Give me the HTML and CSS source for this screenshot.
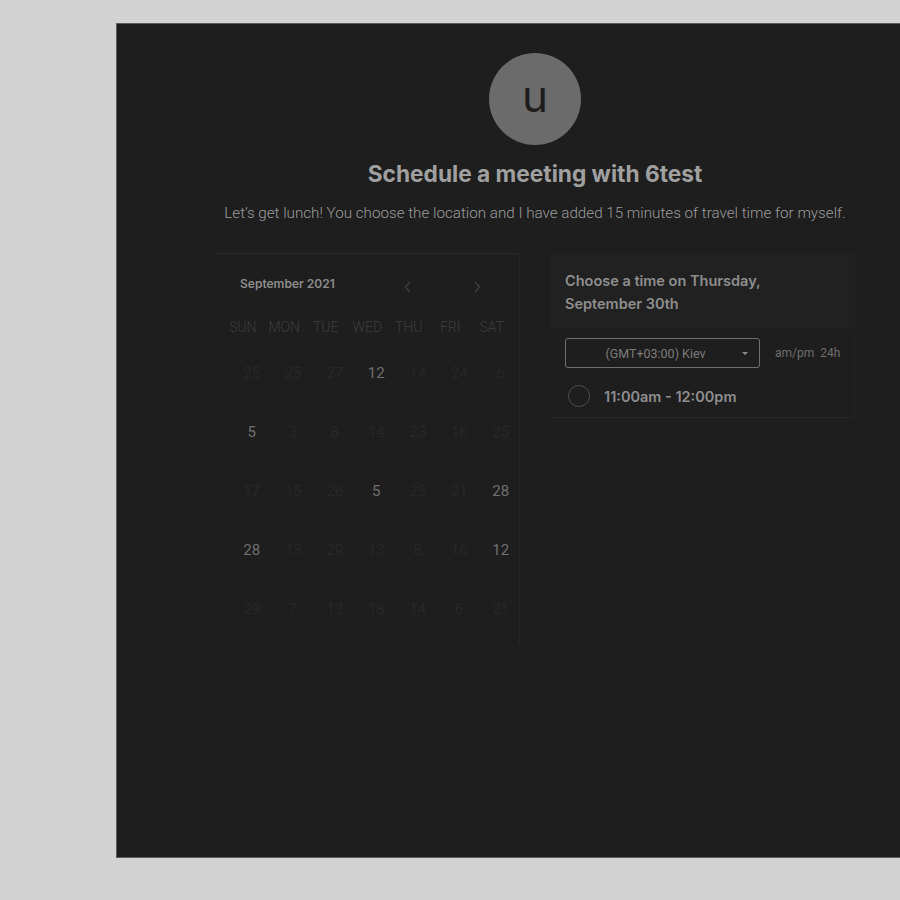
FILE: index.html
```html
<!DOCTYPE html>
<html>
<head>
<meta charset="utf-8">
<link rel="stylesheet" href="styles.css">
</head>
<body>
<div class="panel">
  <div class="inner">
    <div class="avatar">u</div>
    <h1 class="title">Schedule a meeting with 6test</h1>
    <p class="subtitle">Let’s get lunch! You choose the location and I have added 15 minutes of travel time for myself.</p>
    <div class="cards">
      <div class="calendar">
        <div class="cal-head">
          <span class="month">September 2021</span>
          <span class="arrow prev"><svg width="10" height="14" viewBox="0 0 10 14"><path d="M7 2 L2.5 7 L7 12" fill="none" stroke="#3e3e3e" stroke-width="1.5"/></svg></span>
          <span class="arrow next"><svg width="10" height="14" viewBox="0 0 10 14"><path d="M3 2 L7.5 7 L3 12" fill="none" stroke="#3e3e3e" stroke-width="1.5"/></svg></span>
        </div>
        <div class="grid">
          <span class="wd">SUN</span><span class="wd">MON</span><span class="wd">TUE</span><span class="wd">WED</span><span class="wd">THU</span><span class="wd">FRI</span><span class="wd">SAT</span>
          <span class="d">25</span><span class="d">25</span><span class="d">27</span><span class="d on">12</span><span class="d">14</span><span class="d">24</span><span class="d">6</span>
          <span class="d on">5</span><span class="d">3</span><span class="d">8</span><span class="d">14</span><span class="d">23</span><span class="d">16</span><span class="d">25</span>
          <span class="d">17</span><span class="d">15</span><span class="d">26</span><span class="d on">5</span><span class="d">25</span><span class="d">21</span><span class="d on">28</span>
          <span class="d on">28</span><span class="d">13</span><span class="d">29</span><span class="d">13</span><span class="d">8</span><span class="d">16</span><span class="d on">12</span>
          <span class="d">29</span><span class="d">7</span><span class="d">13</span><span class="d">18</span><span class="d">14</span><span class="d">6</span><span class="d">21</span>
        </div>
      </div>
      <div class="times">
        <div class="times-head">Choose a time on Thursday, September 30th</div>
        <div class="tz-row">
          <div class="select"><span>(GMT+03:00) Kiev</span><span class="caret"></span></div>
          <span class="fmt">am/pm&nbsp;&nbsp;24h</span>
        </div>
        <div class="slot">
          <span class="radio"></span>
          <span class="slot-text">11:00am - 12:00pm</span>
        </div>
      </div>
    </div>
  </div>
</div>
</body>
</html>
```

FILE: styles.css
```css
html, body {
  margin: 0;
  padding: 0;
  background: #d3d3d3;
  overflow: hidden;
}
body {
  padding: 23px 0 0 116px;
  height: 900px;
  box-sizing: border-box;
}
.panel {
  width: 784px;
  height: 835px;
  box-sizing: border-box;
  background: #1e1e1e;
  border: 1px solid #5c5c5c;
  border-right: none;
  padding: 29px 0 0 98px;
}
.inner {
  width: 640px;
  display: flex;
  flex-direction: column;
  align-items: center;
}
.avatar {
  width: 92px;
  height: 92px;
  border-radius: 50%;
  background: #6b6b6b;
  color: #1c1c1c;
  font-family: Inter, sans-serif;
  font-size: 44px;
  line-height: 86px;
  text-align: center;
}
.title {
  margin: 14px 0 0;
  font-family: Inter, sans-serif;
  font-weight: 700;
  font-size: 22.7px;
  line-height: 30px;
  color: #a0a0a0;
  white-space: nowrap;
}
.subtitle {
  margin: 13px 0 0;
  font-family: Roboto, sans-serif;
  font-weight: 300;
  font-size: 15.2px;
  line-height: 22px;
  color: #9c9c9c;
  white-space: nowrap;
}
.cards {
  margin-top: 29px;
  width: 640px;
  display: flex;
  gap: 30px;
  align-items: flex-start;
}
.calendar {
  width: 305px;
  box-sizing: border-box;
  border-top: 1px solid #292929;
  border-right: 1px solid #262626;
  padding: 0 6px 6px 7px;
}
.cal-head {
  height: 56px;
  display: flex;
  align-items: center;
  padding-left: 18px;
}
.month {
  font-family: Inter, sans-serif;
  font-weight: 600;
  font-size: 12px;
  color: #8c8c8c;
  width: 163px;
  margin-top: 2px;
}
.arrow {
  display: flex;
  margin-top: 10px;
}
.prev { margin-left: 0; }
.next { margin-left: 59px; }
.grid {
  display: grid;
  grid-template-columns: repeat(7, 41.5px);
  grid-auto-rows: 59px;
  grid-template-rows: 33px;
}
.wd {
  font-family: Roboto, sans-serif;
  font-weight: 300;
  font-size: 14px;
  color: #3d3d3d;
  display: flex;
  align-items: center;
  justify-content: center;
}
.d {
  font-family: Roboto, sans-serif;
  font-weight: 300;
  font-size: 15px;
  color: #2b2b2b;
  display: flex;
  align-items: center;
  justify-content: center;
  padding-left: 18px;
}
.d.on {
  color: #707070;
  font-weight: 400;
}
.times {
  width: 305px;
  box-sizing: border-box;
  border-bottom: 1px solid #262626;
  border-right: 1px solid #222;
  padding-bottom: 10px;
}
.times-head {
  background: #212121;
  padding: 16px 60px 14px 15px;
  font-family: Inter, sans-serif;
  font-weight: 600;
  font-size: 14.5px;
  line-height: 23px;
  color: #8e8e8e;
}
.tz-row {
  display: flex;
  align-items: center;
  margin: 9px 0 0 15px;
}
.select {
  width: 195px;
  height: 30px;
  box-sizing: border-box;
  border: 1px solid #6e6e6e;
  border-radius: 3px;
  display: flex;
  align-items: center;
  justify-content: center;
  position: relative;
  font-family: Roboto, sans-serif;
  font-size: 12.5px;
  color: #7c7c7c;
  padding-right: 14px;
}
.caret {
  position: absolute;
  right: 11px;
  top: 13px;
  border-left: 3px solid transparent;
  border-right: 3px solid transparent;
  border-top: 3px solid #8a8a8a;
}
.fmt {
  margin-left: 15px;
  font-family: Roboto, sans-serif;
  font-size: 12px;
  color: #6e6e6e;
}
.slot {
  display: flex;
  align-items: center;
  margin: 17px 0 0 18px;
}
.radio {
  width: 20px;
  height: 20px;
  border: 1px solid #4e4e4e;
  border-radius: 50%;
}
.slot-text {
  margin-left: 14px;
  font-family: Inter, sans-serif;
  font-weight: 600;
  font-size: 14.5px;
  color: #8e8e8e;
}
```
